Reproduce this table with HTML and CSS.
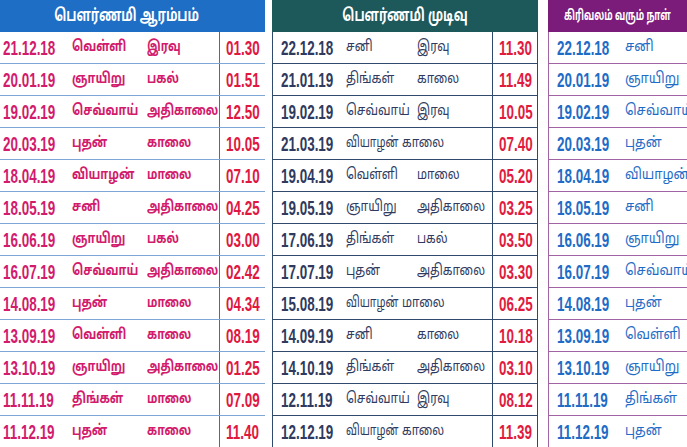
FILE: index.html
```html
<!DOCTYPE html>
<html lang="ta">
<head>
<meta charset="utf-8">
<title>பௌர்ணமி அட்டவணை</title>
<link rel="stylesheet" href="styles.css">
</head>
<body>
<div class="page">
  <section class="tbl t1">
    <div class="head"><span class="htxt">பௌர்ணமி ஆரம்பம்</span></div>
    <div class="row"><span class="date"><span class="num">21.12.18</span></span><span class="day"><span class="ta">வெள்ளி</span></span><span class="per"><span class="ta">இரவு</span></span><span class="time"><span class="num">01.30</span></span></div>
    <div class="row"><span class="date"><span class="num">20.01.19</span></span><span class="day"><span class="ta">ஞாயிறு</span></span><span class="per"><span class="ta">பகல்</span></span><span class="time"><span class="num">01.51</span></span></div>
    <div class="row"><span class="date"><span class="num">19.02.19</span></span><span class="day"><span class="ta">செவ்வாய்</span></span><span class="per"><span class="ta">அதிகாலை</span></span><span class="time"><span class="num">12.50</span></span></div>
    <div class="row"><span class="date"><span class="num">20.03.19</span></span><span class="day"><span class="ta">புதன்</span></span><span class="per"><span class="ta">காலை</span></span><span class="time"><span class="num">10.05</span></span></div>
    <div class="row"><span class="date"><span class="num">18.04.19</span></span><span class="day"><span class="ta">வியாழன்</span></span><span class="per"><span class="ta">மாலை</span></span><span class="time"><span class="num">07.10</span></span></div>
    <div class="row"><span class="date"><span class="num">18.05.19</span></span><span class="day"><span class="ta">சனி</span></span><span class="per"><span class="ta">அதிகாலை</span></span><span class="time"><span class="num">04.25</span></span></div>
    <div class="row"><span class="date"><span class="num">16.06.19</span></span><span class="day"><span class="ta">ஞாயிறு</span></span><span class="per"><span class="ta">பகல்</span></span><span class="time"><span class="num">03.00</span></span></div>
    <div class="row"><span class="date"><span class="num">16.07.19</span></span><span class="day"><span class="ta">செவ்வாய்</span></span><span class="per"><span class="ta">அதிகாலை</span></span><span class="time"><span class="num">02.42</span></span></div>
    <div class="row"><span class="date"><span class="num">14.08.19</span></span><span class="day"><span class="ta">புதன்</span></span><span class="per"><span class="ta">மாலை</span></span><span class="time"><span class="num">04.34</span></span></div>
    <div class="row"><span class="date"><span class="num">13.09.19</span></span><span class="day"><span class="ta">வெள்ளி</span></span><span class="per"><span class="ta">காலை</span></span><span class="time"><span class="num">08.19</span></span></div>
    <div class="row"><span class="date"><span class="num">13.10.19</span></span><span class="day"><span class="ta">ஞாயிறு</span></span><span class="per"><span class="ta">அதிகாலை</span></span><span class="time"><span class="num">01.25</span></span></div>
    <div class="row"><span class="date"><span class="num">11.11.19</span></span><span class="day"><span class="ta">திங்கள்</span></span><span class="per"><span class="ta">மாலை</span></span><span class="time"><span class="num">07.09</span></span></div>
    <div class="row"><span class="date"><span class="num">11.12.19</span></span><span class="day"><span class="ta">புதன்</span></span><span class="per"><span class="ta">காலை</span></span><span class="time"><span class="num">11.40</span></span></div>
  </section>

  <section class="tbl t2">
    <div class="head"><span class="htxt">பௌர்ணமி முடிவு</span></div>
    <div class="row"><span class="date"><span class="num">22.12.18</span></span><span class="day"><span class="ta">சனி</span></span><span class="per"><span class="ta">இரவு</span></span><span class="time"><span class="num">11.30</span></span></div>
    <div class="row"><span class="date"><span class="num">21.01.19</span></span><span class="day"><span class="ta">திங்கள்</span></span><span class="per"><span class="ta">காலை</span></span><span class="time"><span class="num">11.49</span></span></div>
    <div class="row"><span class="date"><span class="num">19.02.19</span></span><span class="day"><span class="ta">செவ்வாய்</span></span><span class="per"><span class="ta">இரவு</span></span><span class="time"><span class="num">10.05</span></span></div>
    <div class="row close"><span class="date"><span class="num">21.03.19</span></span><span class="day"><span class="ta">வியாழன்</span></span><span class="per"><span class="ta">காலை</span></span><span class="time"><span class="num">07.40</span></span></div>
    <div class="row"><span class="date"><span class="num">19.04.19</span></span><span class="day"><span class="ta">வெள்ளி</span></span><span class="per"><span class="ta">மாலை</span></span><span class="time"><span class="num">05.20</span></span></div>
    <div class="row"><span class="date"><span class="num">19.05.19</span></span><span class="day"><span class="ta">ஞாயிறு</span></span><span class="per"><span class="ta">அதிகாலை</span></span><span class="time"><span class="num">03.25</span></span></div>
    <div class="row"><span class="date"><span class="num">17.06.19</span></span><span class="day"><span class="ta">திங்கள்</span></span><span class="per"><span class="ta">பகல்</span></span><span class="time"><span class="num">03.50</span></span></div>
    <div class="row"><span class="date"><span class="num">17.07.19</span></span><span class="day"><span class="ta">புதன்</span></span><span class="per"><span class="ta">அதிகாலை</span></span><span class="time"><span class="num">03.30</span></span></div>
    <div class="row close"><span class="date"><span class="num">15.08.19</span></span><span class="day"><span class="ta">வியாழன்</span></span><span class="per"><span class="ta">மாலை</span></span><span class="time"><span class="num">06.25</span></span></div>
    <div class="row"><span class="date"><span class="num">14.09.19</span></span><span class="day"><span class="ta">சனி</span></span><span class="per"><span class="ta">காலை</span></span><span class="time"><span class="num">10.18</span></span></div>
    <div class="row"><span class="date"><span class="num">14.10.19</span></span><span class="day"><span class="ta">திங்கள்</span></span><span class="per"><span class="ta">அதிகாலை</span></span><span class="time"><span class="num">03.10</span></span></div>
    <div class="row"><span class="date"><span class="num">12.11.19</span></span><span class="day"><span class="ta">செவ்வாய்</span></span><span class="per"><span class="ta">இரவு</span></span><span class="time"><span class="num">08.12</span></span></div>
    <div class="row close"><span class="date"><span class="num">12.12.19</span></span><span class="day"><span class="ta">வியாழன்</span></span><span class="per"><span class="ta">காலை</span></span><span class="time"><span class="num">11.39</span></span></div>
  </section>

  <section class="tbl t3">
    <div class="head"><span class="htxt">கிரிவலம் வரும் நாள்</span></div>
    <div class="row"><span class="date"><span class="num">22.12.18</span></span><span class="day"><span class="ta">சனி</span></span></div>
    <div class="row"><span class="date"><span class="num">20.01.19</span></span><span class="day"><span class="ta">ஞாயிறு</span></span></div>
    <div class="row"><span class="date"><span class="num">19.02.19</span></span><span class="day"><span class="ta">செவ்வாய்</span></span></div>
    <div class="row"><span class="date"><span class="num">20.03.19</span></span><span class="day"><span class="ta">புதன்</span></span></div>
    <div class="row"><span class="date"><span class="num">18.04.19</span></span><span class="day"><span class="ta">வியாழன்</span></span></div>
    <div class="row"><span class="date"><span class="num">18.05.19</span></span><span class="day"><span class="ta">சனி</span></span></div>
    <div class="row"><span class="date"><span class="num">16.06.19</span></span><span class="day"><span class="ta">ஞாயிறு</span></span></div>
    <div class="row"><span class="date"><span class="num">16.07.19</span></span><span class="day"><span class="ta">செவ்வாய்</span></span></div>
    <div class="row"><span class="date"><span class="num">14.08.19</span></span><span class="day"><span class="ta">புதன்</span></span></div>
    <div class="row"><span class="date"><span class="num">13.09.19</span></span><span class="day"><span class="ta">வெள்ளி</span></span></div>
    <div class="row"><span class="date"><span class="num">13.10.19</span></span><span class="day"><span class="ta">ஞாயிறு</span></span></div>
    <div class="row"><span class="date"><span class="num">11.11.19</span></span><span class="day"><span class="ta">திங்கள்</span></span></div>
    <div class="row"><span class="date"><span class="num">11.12.19</span></span><span class="day"><span class="ta">புதன்</span></span></div>
  </section>
</div>
</body>
</html>
```

FILE: styles.css
```css
html, body {
  margin: 0;
  padding: 0;
  background: #ffffff;
}
body {
  width: 687px;
  height: 447px;
  overflow: hidden;
  font-family: "Noto Sans Tamil", "Lohit Tamil", "Noto Sans", "Liberation Sans", sans-serif;
}
.page {
  display: flex;
  gap: 7px;
  align-items: flex-start;
}
.tbl {
  flex: none;
  display: flex;
  flex-direction: column;
}
.t1 { width: 265px; }
.t2 { width: 266px; }
.t3 { width: 139px; margin-left: 3px; overflow: hidden; }

/* headers */
.head {
  height: 32px;
  display: flex;
  align-items: center;
  justify-content: center;
  color: #ffffff;
  font-weight: 700;
  font-size: 17px;
  white-space: nowrap;
  overflow: hidden;
}
.htxt {
  display: inline-block;
  transform: scaleX(0.72);
  transform-origin: center center;
}
.t1 .head { background: #1d6ec4; padding-right: 12px; }
.t2 .head { background: #1d585a; }
.t3 .head { background: #7b1c7b; font-size: 14px; }
.t3 .htxt { transform: scaleX(0.64); }

/* rows */
.row {
  height: 32px;
  box-sizing: border-box;
  display: grid;
  align-items: center;
  white-space: nowrap;
}
.t1 .row {
  grid-template-columns: 72px 75px 72px 46px;
  border-bottom: 1.5px solid #7ea7d8;
  color: #d21b6c;
}
.t2 .row {
  grid-template-columns: 72.5px 71px 75px 46px;
  border-bottom: 1.5px solid #2f4a6d;
  border-left: 1.5px solid #2f4a6d;
  color: #2f3a5e;
}
.t2 .row.close {
  grid-template-columns: 72.5px 56px 90px 46px;
}
.t3 .row {
  grid-template-columns: 75.5px 62px;
  border-bottom: 1.5px solid #a163a4;
  border-left: 1.5px solid #a163a4;
  color: #1f6cc6;
}

.date, .day, .per, .time {
  height: 100%;
  display: flex;
  align-items: center;
  overflow: visible;
  box-sizing: border-box;
}
.date { padding-left: 3px; }
.t2 .date { padding-left: 8px; }
.t3 .date { padding-left: 8px; }

.ta {
  display: inline-block;
  font-size: 15px;
  transform-origin: left center;
}
.t1 .ta { font-weight: 700; }
.t1 .day .ta { transform: scaleX(0.76); }
.t1 .per .ta { transform: scaleX(0.74); }
.t2 .day .ta { transform: scaleX(0.8); }
.t2 .close .day .ta { transform: scaleX(0.7); }
.t2 .per .ta { transform: scaleX(0.78); }
.t3 .day .ta { transform: scaleX(0.86); }

.time { padding-left: 6px; }
.t1 .time { border-left: 1.5px solid #5b60ae; color: #e0183f; }
.t2 .time { border-left: 1.5px solid #2f4a6d; border-right: 1.5px solid #2f4a6d; color: #e11b3e; }

.num {
  display: inline-block;
  font-family: "Liberation Sans", Arial, sans-serif;
  font-weight: 700;
  font-size: 21px;
  transform: scaleX(0.64);
  transform-origin: left center;
}
```
